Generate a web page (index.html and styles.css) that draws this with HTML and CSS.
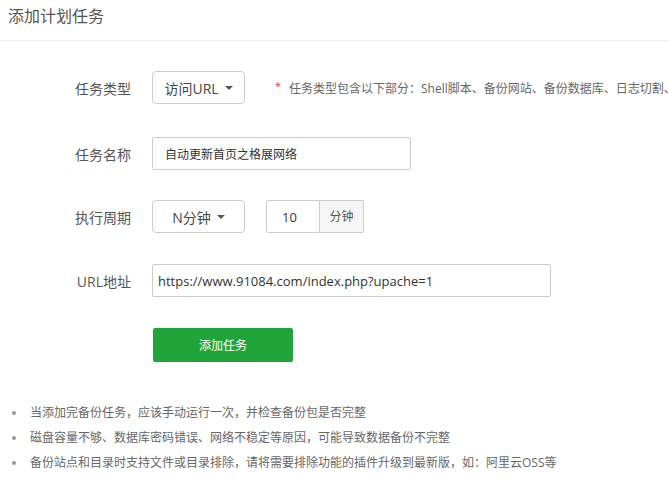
FILE: index.html
```html
<!DOCTYPE html>
<html lang="zh-CN">
<head>
    <meta charset="UTF-8">
    <title>添加计划任务</title>
    <link rel="stylesheet" href="styles.css">
</head>
<body>
    <div class="page">
        <div class="page-title">添加计划任务</div>

        <!-- 表单 -->
        <form class="task-form">
            <div class="form-row row-type">
                <label class="form-label">任务类型</label>
                <div class="select-btn select-type">访问URL <span class="caret"></span></div>
                <span class="form-note"><em>*</em>任务类型包含以下部分：Shell脚本、备份网站、备份数据库、日志切割、</span>
            </div>
            <div class="form-row row-name">
                <label class="form-label">任务名称</label>
                <input class="text-input input-name" type="text" value="自动更新首页之格展网络">
            </div>
            <div class="form-row">
                <label class="form-label">执行周期</label>
                <div class="select-btn select-cycle">N分钟 <span class="caret"></span></div>
                <div class="input-group">
                    <input class="text-input input-num" type="text" value="10">
                    <span class="addon">分钟</span>
                </div>
            </div>
            <div class="form-row">
                <label class="form-label">URL地址</label>
                <input class="text-input input-url" type="text" value="https://www.91084.com/index.php?upache=1">
            </div>
            <div class="form-row row-submit">
                <span class="form-label"></span>
                <button type="button" class="btn-submit">添加任务</button>
            </div>
        </form>

        <ul class="tips">
            <li>当添加完备份任务，应该手动运行一次，并检查备份包是否完整</li>
            <li>磁盘容量不够、数据库密码错误、网络不稳定等原因，可能导致数据备份不完整</li>
            <li>备份站点和目录时支持文件或目录排除，请将需要排除功能的插件升级到最新版，如：阿里云OSS等</li>
        </ul>
    </div>
</body>
</html>
```

FILE: styles.css
```css
body {
    margin: 0;
    padding: 0;
    font-family: "Open Sans", "Noto Sans CJK SC", sans-serif;
    color: #555;
    background: #fff;
    overflow: hidden;
}

.page {
    width: 669px;
    overflow: hidden;
}

.page-title {
    height: 40px;
    line-height: 33px;
    padding-left: 8px;
    font-size: 16px;
    color: #555;
    border-bottom: 1px solid #ebebeb;
}

/* Form */
.task-form {
    padding-top: 30px;
}

.form-row {
    display: flex;
    align-items: center;
    height: 33px;
    margin-bottom: 31px;
    white-space: nowrap;
}

.row-type {
    margin-bottom: 33px;
}

.row-name {
    margin-bottom: 30px;
}

.row-submit {
    height: 34px;
    margin-bottom: 0;
}

.form-label {
    width: 131px;
    padding-right: 21px;
    text-align: right;
    font-size: 14px;
    color: #555;
    flex-shrink: 0;
}

.select-btn {
    box-sizing: border-box;
    width: 93px;
    height: 33px;
    flex-shrink: 0;
    display: flex;
    align-items: center;
    justify-content: center;
    gap: 6px;
    border: 1px solid #ccc;
    border-radius: 4px;
    font-size: 14px;
    color: #444;
}

.caret {
    width: 0;
    height: 0;
    border-left: 4px solid transparent;
    border-right: 4px solid transparent;
    border-top: 4px solid #555;
}

.form-note {
    display: flex;
    align-items: center;
    margin-left: 30px;
    font-size: 12px;
    color: #666;
}

.form-note em {
    font-style: normal;
    font-size: 11px;
    color: #e53935;
    width: 14px;
    position: relative;
    top: -2px;
}

.text-input {
    box-sizing: border-box;
    height: 33px;
    border: 1px solid #ccc;
    border-radius: 2px;
    font-family: inherit;
    color: #333;
    outline: none;
}

.input-name {
    width: 259px;
    padding: 0 12px;
    font-size: 12px;
}

.input-url {
    width: 399px;
    padding: 0 5px;
    font-size: 13px;
}

.input-group {
    display: flex;
    margin-left: 21px;
}

.input-num {
    width: 54px;
    padding: 0 15px;
    font-size: 13px;
    border-radius: 2px 0 0 2px;
}

.addon {
    box-sizing: border-box;
    width: 44px;
    height: 33px;
    line-height: 31px;
    text-align: center;
    font-size: 12px;
    color: #555;
    background: #f5f5f5;
    border: 1px solid #ccc;
    border-left: none;
    border-radius: 0 2px 2px 0;
}

.btn-submit {
    width: 140px;
    height: 34px;
    margin-left: 1px;
    border: none;
    border-radius: 2px;
    background-color: #20a53a;
    color: #fff;
    font-family: inherit;
    font-size: 12px;
    cursor: pointer;
}

/* Tips */
.tips {
    margin: 38px 0 0;
    padding: 0 0 0 12px;
    list-style: none;
    font-size: 12px;
    line-height: 25px;
    color: #666;
}

.tips li {
    display: flex;
    align-items: center;
}

.tips li::before {
    content: "";
    width: 4px;
    height: 4px;
    margin-right: 14px;
    border-radius: 50%;
    background: #999;
    flex-shrink: 0;
}
```
